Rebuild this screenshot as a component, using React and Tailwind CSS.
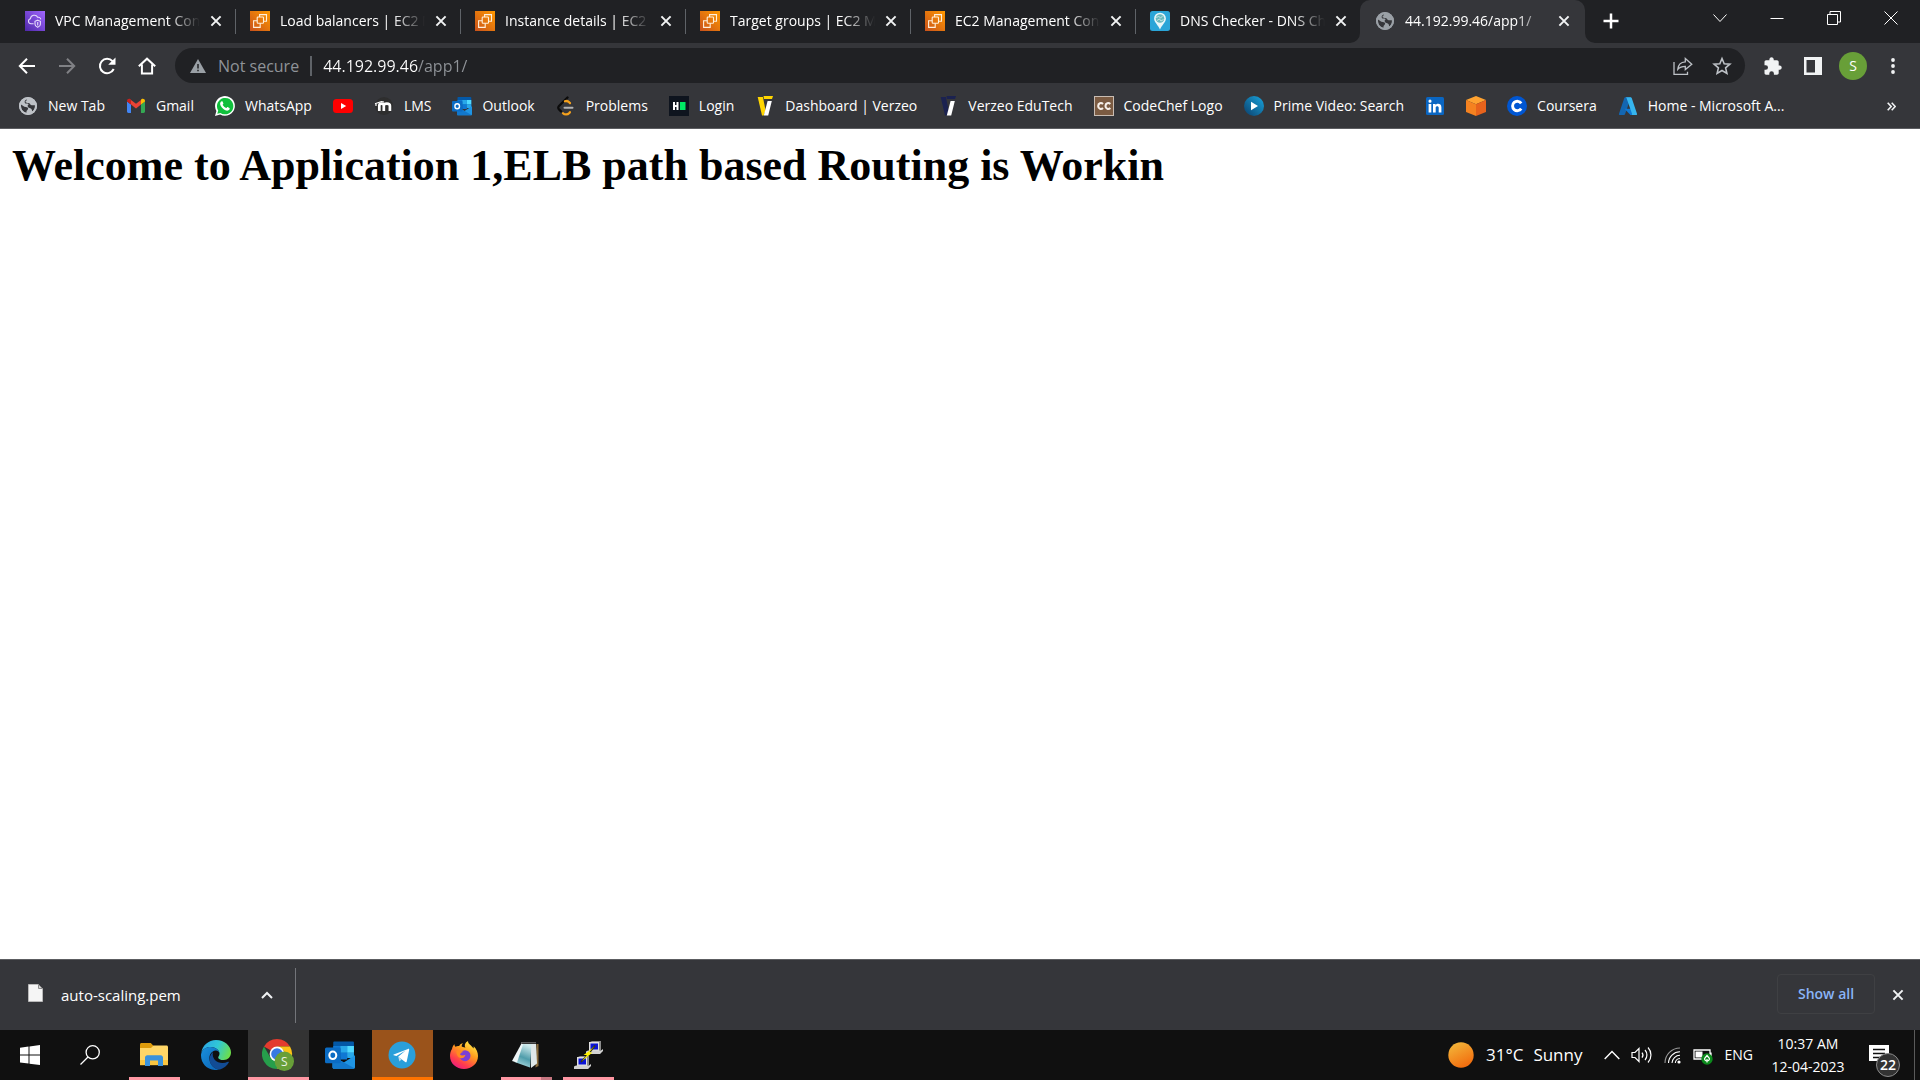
import React from "react";

/* ---------- favicons ---------- */

function Icon({ children, box = "0 0 20 20", className = "h-5 w-5" }) {
  return (
    <svg viewBox={box} className={`${className} shrink-0`} fill="none" aria-hidden="true">
      {children}
    </svg>
  );
}

const VpcIcon = () => (
  <Icon>
    <defs>
      <linearGradient id="vpc" x1="0" y1="1" x2="1" y2="0">
        <stop stopColor="#4d27a8" />
        <stop offset="1" stopColor="#a166ff" />
      </linearGradient>
    </defs>
    <path fill="url(#vpc)" d="M0 0h20v20H0z" />
    <path
      stroke="#e6dcfb"
      strokeWidth="1.1"
      d="M8.6 12.8H6A2.6 2.6 0 0 1 5.4 7.700A3.900 3.900 0 0 1 12.700 6.300A2.500 2.500 0 0 1 15.800 8.300M12.700 9.200l2.700 1.100v2.900c0 1.500-1.200 2.500-2.700 3.100c-1.500-.6-2.700-1.600-2.700-3.100v-2.900zM12.700 11v3.600"
    />
  </Icon>
);

const Ec2Icon = () => (
  <Icon>
    <defs>
      <linearGradient id="ec2" x1="0" y1="1" x2="1" y2="0">
        <stop stopColor="#c8511b" />
        <stop offset="1" stopColor="#ff9900" />
      </linearGradient>
    </defs>
    <path fill="url(#ec2)" d="M0 0h20v20H0z" />
    <g stroke="#fff0dc" strokeWidth="1.1">
      <rect x="7.200" y="6" width="6.300" height="6.300" rx=".8" />
      <path d="M9.600 6V3.600h6.900v6.600h-3" />
      <path d="M7.200 9.800H3.600v6.600h6.600v-4.100" />
    </g>
  </Icon>
);

const DnsIcon = () => (
  <Icon>
    <rect width="20" height="20" rx="2.500" fill="#2aa5d8" />
    <path fill="#e8f6f8" d="M10 1.700a5.800 5.800 0 0 1 5.900 5.800c0 4-4.200 6.600-5.900 11C8.300 14.100 4.100 11.500 4.100 7.500A5.800 5.800 0 0 1 10 1.700z" />
    <circle cx="10" cy="7.500" r="4.300" fill="#69b9bd" />
    <path stroke="#d8eff0" strokeWidth=".8" d="M6.200 6.500l2.500-1 2 1.300 2-1.700M7 9.500l2.500-1.500 1.500 2 2.500-1.500" />
  </Icon>
);

const GlobeIcon = ({ fill = "#bdc1c6", back = "#35363a" }) => (
  <Icon>
    <circle cx="10" cy="10" r="9" fill={fill} />
    <path
      fill={back}
      d="M3 8.400c1.700 1 2.700 2.400 4.800 2.500c1.500.1 2.300.5 2.300 1.700c0 1.500-1.800 1.500-1.600 4.200C5 16.200 2.800 13.300 3 8.400zM8.600 3.300c.2 1.200-.3 1.900-1.300 2.300c.3 1.200 1.500 1.400 2.900 1.300c1.900-.1 1.500 1.500 2.900 2.200c1.200.6 2.400-.3 3.800.2c.3 2.700-1 5-2.900 6.300c.2-1.500-.2-2.700-1.200-3.100c-1.600-.6-2.900-.8-3.100-2.200c-.2-1.200.6-1.700 1.200-2.200c-.8-1-3.600.3-4.200-1.700c-.3-1 .5-2.200 1.900-3.100z"
    />
    <circle cx="10" cy="10" r="8.100" stroke={fill} strokeWidth="1.800" />
  </Icon>
);

const GmailIcon = () => (
  <Icon>
    <path fill="#4285f4" d="M1 5.600l4 3V17H2.400C1.600 17 1 16.400 1 15.600z" />
    <path fill="#34a853" d="M15 8.600l4-3v10c0 .8-.6 1.400-1.400 1.400H15z" />
    <path fill="#ea4335" d="M5 3.900l5 3.900 5-3.900v4.700l-5 3.800-5-3.800z" />
    <path fill="#c5221f" d="M1 5c0-2 2.200-2.800 3.600-1.700l.4.400v4.900l-4-3z" />
    <path fill="#fbbc04" d="M19 5c0-2-2.200-2.800-3.600-1.700l-.4.400v4.900l4-3z" />
  </Icon>
);

const WhatsAppIcon = () => (
  <Icon>
    <path fill="#fff" d="M0 20l1.400-5.100A9.900 9.900 0 1 1 5.200 18.600z" />
    <path fill="#10bf3c" d="M2.300 17.700l.9-3.200A8.200 8.200 0 1 1 5.500 16.900z" />
    <path
      fill="#fff"
      d="M6.900 5.200c.4 0 .6 0 .8.500l.7 1.700c.1.400-.6 1.100-.8 1.400c.9 1.600 2 2.500 3.800 3.300c.4-.4.800-1.200 1.200-1.100l1.800.9c.5.200.2 1.200 0 1.600c-.4.700-1.400 1.200-2.200 1.200c-2.900-.2-6.900-3.900-7.100-6.900c0-1.300.9-2.600 1.800-2.600z"
    />
  </Icon>
);

const YouTubeIcon = () => (
  <Icon>
    <rect x="0" y="3" width="20" height="14" rx="3.500" fill="#f00" />
    <path fill="#fff" d="M8 7l5.200 3L8 13z" />
  </Icon>
);

const MoodleIcon = () => (
  <Icon>
    <circle cx="10" cy="10" r="9" fill="#2e2e2e" />
    <path stroke="#fff" strokeWidth="2.700" d="M5.300 15V9.600c0-2.700 4.500-2.700 4.500 0V15M9.800 9.600c0-2.700 6.100-2.900 6.100.2V15" />
    <path stroke="#fff" strokeWidth="1.200" d="M1 7.800l6.500-2.300L10 6M2 7.500V10" />
  </Icon>
);

function OutlookIcon({ className }) {
  return (
    <Icon className={className}>
      <path fill="#0358a7" d="M5.500 1.800c0-.5.300-.8.800-.8h12.200c.5 0 .8.300.8.800V11H5.500z" />
      <path fill="#0f78d4" d="M5.500 4h4.700v4.500H5.500z" />
      <path fill="#28a8ea" d="M10.200 4h4.600v4.500h-4.600z" />
      <path fill="#50d9ff" d="M14.800 4h4.500v4.500h-4.500z" />
      <path fill="#0f78d4" d="M10.200 8.500h4.600V13h-4.600z" />
      <path fill="#28a8ea" d="M14.800 8.500h4.500V12h-4.500z" />
      <path fill="#1f95e4" d="M20 10.200v8c0 .6-.4 1-1 1H6c-.6 0-1-.4-1-1v-7.500l7.500 4.300z" />
      <path fill="#1278cc" d="M5 10.700l14.600 8.200c-.2.200-.4.300-.7.300H6c-.6 0-1-.4-1-1z" />
      <rect x="0" y="5" width="10.500" height="10.500" rx="1" fill="#0b6cc4" />
      <ellipse cx="5.200" cy="10.200" rx="2.300" ry="2.500" stroke="#fff" strokeWidth="1.400" />
    </Icon>
  );
}

const LeetCodeIcon = () => (
  <Icon>
    <path stroke="#0b0b0b" strokeWidth="2.300" strokeLinecap="round" strokeLinejoin="round" d="M11.500 1.500L3 10c-1 1-1 2.400 0 3.400l2 2" />
    <path stroke="#f5a11c" strokeWidth="2.300" strokeLinecap="round" d="M7 17.200c1.700 1.700 4.500 1.700 6.300-.3l.6-.7M9 5.300c1.600-.7 3-.3 4.200 1l.8.8" />
    <path stroke="#b3b3b3" strokeWidth="2" strokeLinecap="round" d="M8.500 11.800h8" />
  </Icon>
);

const HackerRankIcon = () => (
  <Icon>
    <path fill="#0e141e" d="M0 0h20v20H0z" />
    <path fill="#fff" d="M4 6h2v3h1.500V6h2v8h-2v-3H6v3H4z" />
    <path fill="#00ea64" d="M11 6h5.500v8H11z" />
  </Icon>
);

function VerzeoIcon({ left, bar, right }) {
  return (
    <Icon>
      <path fill={left} d="M2.700 1h5.200l2.700 13.500-2 5H7z" />
      <path fill={bar} d="M8.500 0H18l-1 3H9z" />
      <path fill={right} d="M12.600 5h4.200l-3.600 14.500H8.800z" />
    </Icon>
  );
}

const CodeChefIcon = () => (
  <Icon>
    <rect x=".5" y=".5" width="19" height="19" fill="#7b5b42" stroke="#c8bcb2" />
    <path stroke="#f6efe9" strokeWidth="2.100" d="M9 7.900C7.300 6.300 4.200 6.800 4.200 10s3.100 3.700 4.800 2.100M16.300 7.900c-1.700-1.600-4.800-1.100-4.800 2.100s3.100 3.700 4.800 2.100" />
  </Icon>
);

const PrimeIcon = () => (
  <Icon>
    <defs>
      <linearGradient id="prime" x1="0" y1="1" x2="1" y2="0">
        <stop stopColor="#0b3f6b" />
        <stop offset="1" stopColor="#18a5de" />
      </linearGradient>
    </defs>
    <circle cx="10" cy="10" r="10" fill="url(#prime)" />
    <path fill="#fff" d="M7 5.800l7 4.200-7 4.200z" />
  </Icon>
);

const LinkedInIcon = () => (
  <Icon>
    <rect x="1" y="1" width="18" height="18" rx="1.500" fill="#0a66c2" />
    <path fill="#fff" d="M3.600 8h2.700v8.400H3.600zM5 3.600a1.500 1.500 0 1 1 0 3.100a1.500 1.500 0 0 1 0-3.100zM8 8h2.600v1.200c1.300-2.200 5.800-1.900 5.800 2v5.200h-2.700v-4.600c0-2.100-3-2-3 0v4.600H8z" />
  </Icon>
);

const CubeIcon = () => (
  <Icon>
    <path fill="#ffa230" d="M10 0l10 4-10 4.300L0 4z" />
    <path fill="#f58220" d="M0 4l10 4.300V20L0 16z" />
    <path fill="#e8631c" d="M20 4L10 8.300V20l10-4z" />
  </Icon>
);

const CourseraIcon = () => (
  <Icon>
    <circle cx="10" cy="10" r="10" fill="#0056d2" />
    <path stroke="#fff" strokeWidth="2.900" d="M14.200 7.400a4.700 4.700 0 1 0 0 5.200" />
  </Icon>
);

const AzureIcon = () => (
  <Icon>
    <path fill="#1366b1" d="M7.300 1.300H13L7 18.300c-.2.400-.5.700-1 .7H1.900c-.7 0-1.200-.6-.9-1.300L6.300 2c.2-.4.5-.7 1-.7z" />
    <path fill="#0f78d4" d="M15.500 12.800H6.500l5.700 5.900c.3.200.5.300.8.300h4z" />
    <path fill="#36b5ee" d="M13.700 2c-.2-.4-.6-.7-1-.7H7.500c.4 0 .8.300 1 .7L14 17.700c.2.700-.2 1.300-.9 1.300h5c.7 0 1.200-.6.900-1.300z" />
  </Icon>
);

const CloseGlyph = () => (
  <svg viewBox="0 0 12 12" className="h-3 w-3" stroke="#f1f3f4" strokeWidth="2" fill="none" aria-hidden="true">
    <path d="M1.400 1.400l9.200 9.200M10.600 1.400l-9.200 9.200" />
  </svg>
);

/* ---------- tab strip ---------- */

const tabs = [
  { title: "VPC Management Console", icon: <VpcIcon /> },
  { title: "Load balancers | EC2 Management", icon: <Ec2Icon /> },
  { title: "Instance details | EC2 Management", icon: <Ec2Icon /> },
  { title: "Target groups | EC2 Management", icon: <Ec2Icon /> },
  { title: "EC2 Management Console", icon: <Ec2Icon /> },
  { title: "DNS Checker - DNS Check", icon: <DnsIcon /> },
  { title: "44.192.99.46/app1/", icon: <GlobeIcon fill="#9aa0a6" />, active: true },
];

function Flare({ side }) {
  return (
    <svg
      viewBox="0 0 10 10"
      className={side === "left" ? "absolute bottom-0 -left-[10px] h-[10px] w-[10px]" : "absolute bottom-0 -right-[10px] h-[10px] w-[10px]"}
      aria-hidden="true"
    >
      <path fill="#35363a" d={side === "left" ? "M10 0v10H0A10 10 0 0 0 10 0z" : "M0 0v10h10A10 10 0 0 1 0 0z"} />
    </svg>
  );
}

function Tab({ tab, divider }) {
  return (
    <div
      className={
        tab.active
          ? "relative flex h-full w-[225px] items-center rounded-t-[10px] bg-[#35363a] pr-[11px] pb-[2px] pl-[15px]"
          : "relative flex h-full w-[225px] items-center pr-[9px] pb-[2px] pl-[15px]"
      }
    >
      <button role="tab" aria-selected={!!tab.active} className="flex min-w-0 flex-1 items-center gap-[10px] text-left">
        {tab.icon}
        <span className="min-w-0 flex-1 overflow-hidden whitespace-nowrap [mask-image:linear-gradient(to_right,black_calc(100%-32px),transparent)]">
          {tab.title}
        </span>
      </button>
      <button aria-label={`Close ${tab.title}`} className="ml-[6px] flex h-5 w-5 items-center justify-center">
        <CloseGlyph />
      </button>
      {divider && <span className="absolute top-[9px] -right-px h-[25px] w-px bg-[#5f6368]" />}
      {tab.active && (
        <>
          <Flare side="left" />
          <Flare side="right" />
        </>
      )}
    </div>
  );
}

function WindowButton({ label, children }) {
  return (
    <button aria-label={label} className="flex h-9 w-[57px] items-center justify-center">
      <svg viewBox="0 0 14 14" className="h-[14px] w-[14px]" fill="none" stroke="#fff" aria-hidden="true">
        {children}
      </svg>
    </button>
  );
}

function TabStrip() {
  return (
    <div className="flex h-[43px] shrink-0 items-start bg-[#202124] pl-[10px] text-sm">
      <div role="tablist" className="flex h-full">
        {tabs.map((tab, i) => (
          <Tab key={i} tab={tab} divider={i < 5} />
        ))}
      </div>
      <button aria-label="New tab" className="ml-3 flex h-[42px] w-7 items-center justify-center">
        <svg viewBox="0 0 16 16" className="h-4 w-4" stroke="#fff" strokeWidth="2.500" aria-hidden="true">
          <path d="M8 .5v15M.5 8h15" />
        </svg>
      </button>
      <div className="mr-px ml-auto flex">
        <WindowButton label="Search tabs">
          <path d="M.5 3.500L7 10.500l6.500-7" />
        </WindowButton>
        <WindowButton label="Minimize">
          <path d="M.5 7.500h13" />
        </WindowButton>
        <WindowButton label="Restore">
          <path d="M.5 3.500h10v10H.5zM3 3V.5h10.500V11H11" />
        </WindowButton>
        <WindowButton label="Close window">
          <path d="M.5.5l13 13M13.500.5l-13 13" />
        </WindowButton>
      </div>
    </div>
  );
}

/* ---------- toolbar ---------- */

function NavButton({ label, children }) {
  return (
    <button aria-label={label} className="flex h-9 w-10 items-center justify-center">
      <Icon>{children}</Icon>
    </button>
  );
}

function Toolbar() {
  return (
    <div className="flex h-[45px] shrink-0 items-center bg-[#35363a] pr-[7px] pl-[7px]">
      <NavButton label="Back">
        <path stroke="#fff" strokeWidth="2" d="M18 10H3M10 2.700L2.800 10l7.200 7.300" />
      </NavButton>
      <NavButton label="Forward">
        <path stroke="#808185" strokeWidth="2" d="M2 10h15M10 2.700l7.200 7.300-7.200 7.300" />
      </NavButton>
      <NavButton label="Reload">
        <path stroke="#fff" strokeWidth="2" d="M16.700 13a7.200 7.200 0 1 1-1.200-7.800l1.500 1.500" />
        <path fill="#fff" d="M18.500 1.500v7.300h-7.300z" />
      </NavButton>
      <NavButton label="Home">
        <path stroke="#fff" strokeWidth="2" d="M1.800 10.200L10 2.700l8.200 7.500M4.900 8.500v9h10.200v-9" />
      </NavButton>

      <div className="ml-2 flex h-[35px] flex-1 items-center rounded-full bg-[#202124] pr-[4px] pl-[15px] text-base">
        <Icon box="0 0 16 16" className="h-4 w-4">
          <path fill="#9aa0a6" d="M8 1l8 14H0z" />
          <path stroke="#202124" strokeWidth="1.500" d="M8 6v4.500M8 11.700v1.500" />
        </Icon>
        <span className="ml-[12px] text-[#8f9398]">Not secure</span>
        <span className="mx-[11px] h-5 w-[2px] bg-[#5f6368]" />
        <input
          aria-label="Address"
          defaultValue="44.192.99.46/app1/"
          className="min-w-0 flex-1 bg-[linear-gradient(90deg,white_95px,#8f9398_95px)] bg-clip-text text-transparent outline-none"
        />
        <button aria-label="Share" className="flex h-7 w-10 items-center justify-center">
          <Icon>
            <path stroke="#bdc1c6" strokeWidth="1.300" d="M1 6v12.300h13.500v-2.500M4.800 13.300c.4-4.500 3-7.300 7.500-7.500V2.500l6.500 5.700-6.500 5.400v-3.300c-3.300 0-5.500.8-7.500 3z" />
          </Icon>
        </button>
        <button aria-label="Bookmark this page" className="flex h-7 w-[38px] items-center justify-center">
          <Icon>
            <path stroke="#bdc1c6" strokeWidth="1.600" d="M10 2.500l2.200 5.200 5.700.5-4.300 3.700 1.300 5.500-4.900-2.900-4.900 2.900 1.300-5.500-4.300-3.700 5.700-.5z" />
          </Icon>
        </button>
      </div>

      <div className="ml-[8px] flex">
        <NavButton label="Extensions">
          <path fill="#f1f3f4" d="M17 9.400h-1.300V6c0-1-.8-1.700-1.700-1.700h-3.300V3.100a2.200 2.200 0 0 0-4.300 0v1.200H3.100c-.9 0-1.600.8-1.600 1.700v3.200h1.200a2.300 2.300 0 0 1 0 4.600H1.500V17c0 .9.700 1.700 1.600 1.700h3.200v-1.200a2.300 2.300 0 0 1 4.600 0v1.200H14c.9 0 1.700-.8 1.700-1.700v-3.300H17a2.200 2.200 0 0 0 0-4.300z" />
        </NavButton>
        <NavButton label="Side panel">
          <path fill="#f1f3f4" fillRule="evenodd" d="M1 1h18v18H1zM3.500 4v12.500h8.500V4z" />
        </NavButton>
        <button aria-label="Profile" className="flex h-9 w-10 items-center justify-center">
          <span className="flex h-7 w-7 items-center justify-center rounded-full bg-[#689f38] text-sm">S</span>
        </button>
        <NavButton label="Menu">
          <g fill="#f1f3f4">
            <circle cx="10" cy="4" r="1.900" />
            <circle cx="10" cy="10" r="1.900" />
            <circle cx="10" cy="16" r="1.900" />
          </g>
        </NavButton>
      </div>
    </div>
  );
}

/* ---------- bookmarks ---------- */

const bookmarks = [
  { label: "New Tab", icon: <GlobeIcon /> },
  { label: "Gmail", icon: <GmailIcon /> },
  { label: "WhatsApp", icon: <WhatsAppIcon /> },
  { name: "YouTube", icon: <YouTubeIcon /> },
  { label: "LMS", icon: <MoodleIcon /> },
  { label: "Outlook", icon: <OutlookIcon className="h-5 w-5" /> },
  { label: "Problems", icon: <LeetCodeIcon /> },
  { label: "Login", icon: <HackerRankIcon /> },
  { label: "Dashboard | Verzeo", icon: <VerzeoIcon left="#ffd500" bar="#ffd500" right="#ffffff" /> },
  { label: "Verzeo EduTech", icon: <VerzeoIcon left="#1b2250" bar="#1b2250" right="#ffffff" /> },
  { label: "CodeChef Logo", icon: <CodeChefIcon /> },
  { label: "Prime Video: Search", icon: <PrimeIcon /> },
  { name: "LinkedIn", icon: <LinkedInIcon /> },
  { name: "AWS", icon: <CubeIcon /> },
  { label: "Coursera", icon: <CourseraIcon /> },
  { label: "Home - Microsoft A...", icon: <AzureIcon /> },
];

function BookmarksBar() {
  return (
    <nav className="flex h-[41px] shrink-0 items-center gap-[21px] border-b border-[#5c5d61] bg-[#35363a] pb-1 pl-[18px] text-sm whitespace-nowrap">
      {bookmarks.map((b, i) => (
        <a key={i} href="#" aria-label={b.label || b.name} className="flex items-center gap-[10px]">
          {b.icon}
          {b.label && <span>{b.label}</span>}
        </a>
      ))}
      <button aria-label="More bookmarks" className="mr-[24px] ml-auto">
        <svg viewBox="0 0 9 9" className="h-[9px] w-[9px]" fill="none" stroke="#f1f3f4" strokeWidth="1.600" aria-hidden="true">
          <path d="M.7.7l3.500 3.800L.7 8.300M4.700.7l3.500 3.800-3.500 3.800" />
        </svg>
      </button>
    </nav>
  );
}

/* ---------- downloads ---------- */

function DownloadsBar() {
  return (
    <div className="flex h-[71px] shrink-0 items-center border-t border-[#5c5d61] bg-[#35363a]">
      <div className="flex w-[295px] items-center pr-[12px] pl-[28px]">
        <button className="flex items-center gap-[18px] text-[15px]">
          <Icon box="0 0 15 18" className="mb-1 h-[18px] w-[15px]">
            <path fill="#f5f5f5" stroke="#b9b9b9" d="M.5.500h10l4 4v13H.5z" />
            <path fill="#d5d5d5" stroke="#8c8c8c" d="M10.500.5v4h4z" />
          </Icon>
          auto-scaling.pem
        </button>
        <button aria-label="File actions" className="ml-auto flex h-8 w-8 items-center justify-center">
          <svg viewBox="0 0 12 8" className="h-2 w-3" fill="none" stroke="#f1f3f4" strokeWidth="2" aria-hidden="true">
            <path d="M1 7l5-5 5 5" />
          </svg>
        </button>
      </div>
      <span className="h-[55px] w-px bg-[#73757a]" />
      <button className="mb-[2px] ml-auto h-[40px] w-[98px] rounded border border-[#3f4043] text-sm font-semibold text-[#8ab4f8]">
        Show all
      </button>
      <button aria-label="Close downloads bar" className="mr-[10px] ml-[11px] flex h-6 w-6 items-center justify-center">
        <CloseGlyph />
      </button>
    </div>
  );
}

/* ---------- taskbar ---------- */

const ExplorerIcon = () => (
  <Icon box="0 0 28 24" className="h-6 w-7">
    <path fill="#dd9b0b" d="M0 1.500C0 .7.6 0 1.500 0h9.300l2.400 2.500V8H0z" />
    <path fill="#ffd667" d="M0 5h11l2.500-2.500h13c.9 0 1.500.6 1.500 1.500v18H0z" />
    <path fill="#fbc540" d="M0 17h28v5.200H0z" />
    <path fill="#3a92dc" d="M5 14.500c0-1.300 1-2.300 2.300-2.300h13.400c1.300 0 2.300 1 2.300 2.300V23h-5v-5.500h-8V23H5z" />
  </Icon>
);

const EdgeIcon = () => (
  <Icon box="0 0 30 30" className="h-[30px] w-[30px]">
    <defs>
      <linearGradient id="edgeTop" x1="0" y1=".3" x2="1" y2=".6">
        <stop stopColor="#2ba5e6" />
        <stop offset=".5" stopColor="#30c8d6" />
        <stop offset="1" stopColor="#6ddf48" />
      </linearGradient>
      <linearGradient id="edgeLow" x1="0" y1="0" x2="1" y2="1">
        <stop stopColor="#1990dc" />
        <stop offset="1" stopColor="#0b62b4" />
      </linearGradient>
    </defs>
    <path fill="url(#edgeTop)" d="M.3 13C1.200 5.500 7.500 0 15 0c8.500 0 15 6 15 12.500c0 4.500-3.200 7.500-7.300 7.500c-3.500 0-5.500-1.200-5.500-2.600c0-1.200 1.300-1.500 1.300-3.700C18.500 10 14.500 7 9.500 7C5 7 1.500 9.500.3 13z" />
    <path fill="url(#edgeLow)" d="M.1 14C1 9.500 5 7 9.500 7c5 0 9 3 9 6.700c0-2-2-3.400-4-3.200c-4.500.5-6.500 5-6 9c.5 5 4.500 9.500 10.500 10C7.500 32.200-.9 24 .1 14z" />
    <path fill="#124c95" d="M12 12c-3 2.500-4 6-3.200 9.500C10 26 14.500 29.500 19 29.500c4-1.200 7-3.700 8.800-7c.3-.7-.3-1-.9-.7C19 25.500 10 20.500 12 12z" />
  </Icon>
);

const ChromeIcon = () => (
  <Icon box="0 0 32 32" className="h-8 w-8">
    <path fill="#e33b2e" d="M15 0a15 15 0 0 1 13 7.500H15L8.500 11.300 2 7.500A15 15 0 0 1 15 0z" />
    <path fill="#fbc116" d="M28 7.500A15 15 0 0 1 15 30l6.500-11.300V11.300L15 7.500z" />
    <path fill="#269e4b" d="M2 7.500l6.500 11.300L15 22.500h4.300L15 30A15 15 0 0 1 2 7.500z" />
    <circle cx="15" cy="15" r="7.400" fill="#fff" />
    <circle cx="15" cy="15" r="5.800" fill="#3779e3" />
    <circle cx="22.300" cy="22.300" r="9.700" fill="#689f38" />
    <text x="22.300" y="26.500" textAnchor="middle" fill="#eaf2e2" fontSize="12">
      S
    </text>
  </Icon>
);

const TelegramIcon = () => (
  <Icon box="0 0 28 28" className="h-7 w-7">
    <circle cx="14" cy="14" r="13.500" fill="#2a9fda" />
    <path fill="#fff" d="M5.700 13.600l14.300-5.700c.8-.3 1.400.2 1.100 1.300l-2.400 11.200c-.2.900-.8 1-1.500.6l-7-5.200 7.400-6.400-9.200 5.600-2.700-.8c-.5-.1-.5-.4 0-.6z" />
    <path fill="#c8daea" d="M10.200 15.800l1.300 4.700 2.100-2.200z" />
  </Icon>
);

const FirefoxIcon = () => (
  <Icon box="0 0 28 28" className="h-7 w-7">
    <defs>
      <linearGradient id="fox" x1=".8" y1="0" x2=".2" y2="1">
        <stop stopColor="#fff14a" />
        <stop offset=".4" stopColor="#ff9a1e" />
        <stop offset=".75" stopColor="#ff3b4e" />
        <stop offset="1" stopColor="#e5188a" />
      </linearGradient>
    </defs>
    <path fill="url(#fox)" d="M2 8c.3-2 1.300-3.800 2.500-4.700c0 1.200.4 2 1 2.500c1-.8 2.300-1 3.700-.8C10 3.300 11.500 2.400 13 2.300c-1 1-1.400 2.200-1.300 3.200c1.500.8 3.300 1 3.800 1.300C14 4.500 15 1.500 18 0c0 3.500 3.800 4.200 5.300 7.500c.5-.8.5-1.500.4-2.300c3 2.900 4.300 6.300 4.300 9.800c0 7.500-6.300 13-14 13S0 22.500 0 15c0-2.500.7-5 2-7z" />
    <circle cx="15" cy="14.700" r="5.500" fill="#7a3fd6" />
    <path fill="#ff8a1f" d="M6.500 10c2.200-1 5-.8 7 1c-2 .3-2.800 1.200-3.500 2.500c1.500 1.700 3.500 1 5.500.3c-.7 3-3.500 4-5.500 3.300c-2.500-1-4-4-3.500-7.100z" />
  </Icon>
);

const NotepadIcon = () => (
  <Icon box="0 0 30 28" className="h-7 w-[30px]">
    <defs>
      <linearGradient id="note" x1=".6" y1="0" x2=".3" y2="1">
        <stop stopColor="#cfeaec" />
        <stop offset=".55" stopColor="#4f9dab" />
        <stop offset="1" stopColor="#b5e0e4" />
      </linearGradient>
    </defs>
    <path fill="#8a6d3d" d="M25.500 3h2v22l-3 1.500z" />
    <path fill="#dfe7e8" d="M19.500 3H25l1 19.500-6 4.500z" />
    <path fill="url(#note)" d="M10.500 3h10L19 26.500 3.500 21z" />
    <path fill="#eef5f6" d="M10.500 2.500l1.500 1L6 21.500 1 20z" />
    <path stroke="#a9a9a9" strokeWidth="1.500" strokeDasharray="1 1" d="M10.500 1.800H25" />
  </Icon>
);

const PuttyIcon = () => (
  <Icon box="0 0 30 30" className="h-[30px] w-[30px]">
    {[
      [15, 1],
      [3, 16],
    ].map(([x, y]) => (
      <g key={x} transform={`translate(${x} ${y})`}>
        <path fill="#8b8b8b" d="M2 1l2-1h9v9l-2 2H2z" />
        <path fill="#e2e2e2" d="M1 1h10v9H1z" />
        <path fill="#0b13d8" d="M2.500 2.500H10v6H2.500z" />
        <path fill="#d2d2d2" d="M-2 10.500L0 9.500h13l2-1.500v2l-3 3H-2z" />
      </g>
    ))}
    <path stroke="#3a3a10" strokeWidth="1.600" d="M22 5.500l-5 6.500M14 15.500L8 22" />
    <path fill="#fff200" d="M21.500 6L16 12.500h3.500L9 21l5-6h-3.500l5-3.500z" />
  </Icon>
);

const apps = [
  { name: "File Explorer", icon: <ExplorerIcon />, open: true },
  { name: "Edge", icon: <EdgeIcon /> },
  { name: "Chrome", icon: <ChromeIcon />, focused: true },
  { name: "Outlook", icon: <OutlookIcon className="h-[30px] w-[30px]" /> },
  { name: "Telegram", icon: <TelegramIcon />, alert: true },
  { name: "Firefox", icon: <FirefoxIcon /> },
  { name: "Notepad", icon: <NotepadIcon />, stacked: true },
  { name: "PuTTY", icon: <PuttyIcon />, open: true },
];

function TaskbarApp({ app }) {
  let cell = "relative flex h-full w-[61px] items-center justify-center pr-px";
  if (app.focused) cell = "relative flex h-full w-[61px] items-center justify-center pr-px bg-[#333333]";
  if (app.alert) cell = "relative flex h-full w-[61px] items-center justify-center pr-px bg-[#9a531b]";
  return (
    <button aria-label={app.name} className={cell}>
      {app.icon}
      {app.open && <span className="absolute inset-x-[5px] bottom-0 h-[3px] bg-[#ff97a3]" />}
      {app.stacked && <span className="absolute inset-x-[5px] bottom-0 h-[3px] border-r-[11px] border-[#c77781] bg-[#ff97a3]" />}
      {app.focused && <span className="absolute inset-x-0 bottom-0 h-[3px] bg-[#ff97a3]" />}
      {app.alert && <span className="absolute inset-x-0 bottom-0 h-[3px] bg-[#ff7300]" />}
    </button>
  );
}

function Taskbar() {
  return (
    <footer className="flex h-[50px] shrink-0 items-center bg-[#101010] text-sm">
      <button aria-label="Start" className="flex h-full w-[60px] items-center justify-center">
        <Icon>
          <path fill="#fff" d="M0 2.800l8.500-1.200v8H0zM9.500 1.400L20 0v9.600H9.500zM0 10.600h8.500v8L0 17.400zM9.500 10.600H20V20L9.500 18.700z" />
        </Icon>
      </button>
      <button aria-label="Search" className="mr-1 flex h-full w-[60px] items-center justify-center">
        <Icon>
          <circle cx="12.700" cy="7.300" r="6.600" stroke="#fff" strokeWidth="1.300" />
          <path stroke="#fff" strokeWidth="1.300" d="M8 12L.5 19.500" />
        </Icon>
      </button>
      <div className="flex h-full gap-px">
        {apps.map((app) => (
          <TaskbarApp key={app.name} app={app} />
        ))}
      </div>

      <div className="ml-auto flex h-full items-center">
        <button className="flex items-center text-[17px]">
          <Icon box="0 0 26 26" className="h-[26px] w-[26px]">
            <defs>
              <linearGradient id="sun" x1=".2" y1="0" x2=".7" y2="1">
                <stop stopColor="#f3b73a" />
                <stop offset="1" stopColor="#f2690c" />
              </linearGradient>
            </defs>
            <circle cx="13" cy="13" r="12.700" fill="url(#sun)" />
          </Icon>
          <span className="mr-[10px] ml-3">31°C</span>
          <span>Sunny</span>
        </button>
        <button aria-label="Show hidden icons" className="ml-[21px]">
          <Icon box="0 0 16 10" className="h-[10px] w-4">
            <path stroke="#fff" strokeWidth="1.400" d="M.7 9L8 1.500 15.300 9" />
          </Icon>
        </button>
        <button aria-label="Volume" className="ml-[11px]">
          <Icon box="0 0 22 18" className="h-[18px] w-[22px]">
            <path stroke="#fff" strokeWidth="1.200" d="M1 6.500h3L8 2.500v13l-4-4H1zM11 6.500a4 4 0 0 1 0 5M14 4a7.500 7.500 0 0 1 0 10M17 1.500a11 11 0 0 1 0 15" />
          </Icon>
        </button>
        <button aria-label="Network" className="ml-[11px]">
          <Icon box="0 0 17 17" className="h-[17px] w-[17px]">
            <g stroke="#fff" strokeWidth="1.100">
              <path stroke="#9a9a9a" d="M1 16A15 15 0 0 1 16 1" />
              <path d="M4.500 16A11.500 11.500 0 0 1 16 4.800M8 16a8 8 0 0 1 8-7.700M11.300 16a5 5 0 0 1 4.700-4.500" />
            </g>
            <circle cx="15" cy="15" r="1.600" fill="#fff" />
          </Icon>
        </button>
        <button aria-label="Battery" className="mt-1 ml-3">
          <Icon box="0 0 20 16" className="h-4 w-5">
            <path stroke="#fff" strokeWidth="1.300" d="M1 1h16v9H1zM18 3.500v4" />
            <path fill="#fff" d="M2.500 2.500h7v6h-7z" />
            <circle cx="14" cy="10" r="5.700" fill="#0c8a1c" />
            <path stroke="#fff" strokeWidth="1.200" d="M14 13.500V10M14 6.500l2.300 2.800c.6 1.500-.8 2.500-2.300 2.500s-2.900-1-2.300-2.500z" />
          </Icon>
        </button>
        <button className="ml-[12px]">ENG</button>
        <button className="ml-[16px] w-[78px] text-center leading-[23px] whitespace-nowrap">
          <span className="block">10:37 AM</span>
          <span className="block">12-04-2023</span>
        </button>
        <button aria-label="22 notifications" className="relative ml-[22px] h-full w-5">
          <Icon box="0 0 20 20" className="h-5 w-5">
            <path fill="#fff" d="M0 0h20v16h-4l-4 4v-4H0z" />
            <path stroke="#101010" strokeWidth="1.400" d="M4 4.500h12M4 8.500h12M4 12.500h8" />
          </Icon>
          <span className="absolute top-[23px] left-[7px] flex h-6 w-6 items-center justify-center rounded-full border border-[#8a8a8a] bg-[#333333] text-sm font-semibold">
            22
          </span>
        </button>
        <span className="mr-[5px] ml-[25px] h-full w-px bg-[#5a5a5a]" />
      </div>
    </footer>
  );
}

export default function App() {
  return (
    <div className="flex h-screen flex-col overflow-hidden bg-white font-['Open_Sans','Noto_Sans',sans-serif] text-white">
      <TabStrip />
      <Toolbar />
      <BookmarksBar />
      <main className="min-h-0 flex-1 px-3 py-[11px] font-['Liberation_Serif',serif] text-black">
        <h1 className="text-[44px] leading-[52px] font-bold">Welcome to Application 1,ELB path based Routing is Workin</h1>
      </main>
      <DownloadsBar />
      <Taskbar />
    </div>
  );
}
